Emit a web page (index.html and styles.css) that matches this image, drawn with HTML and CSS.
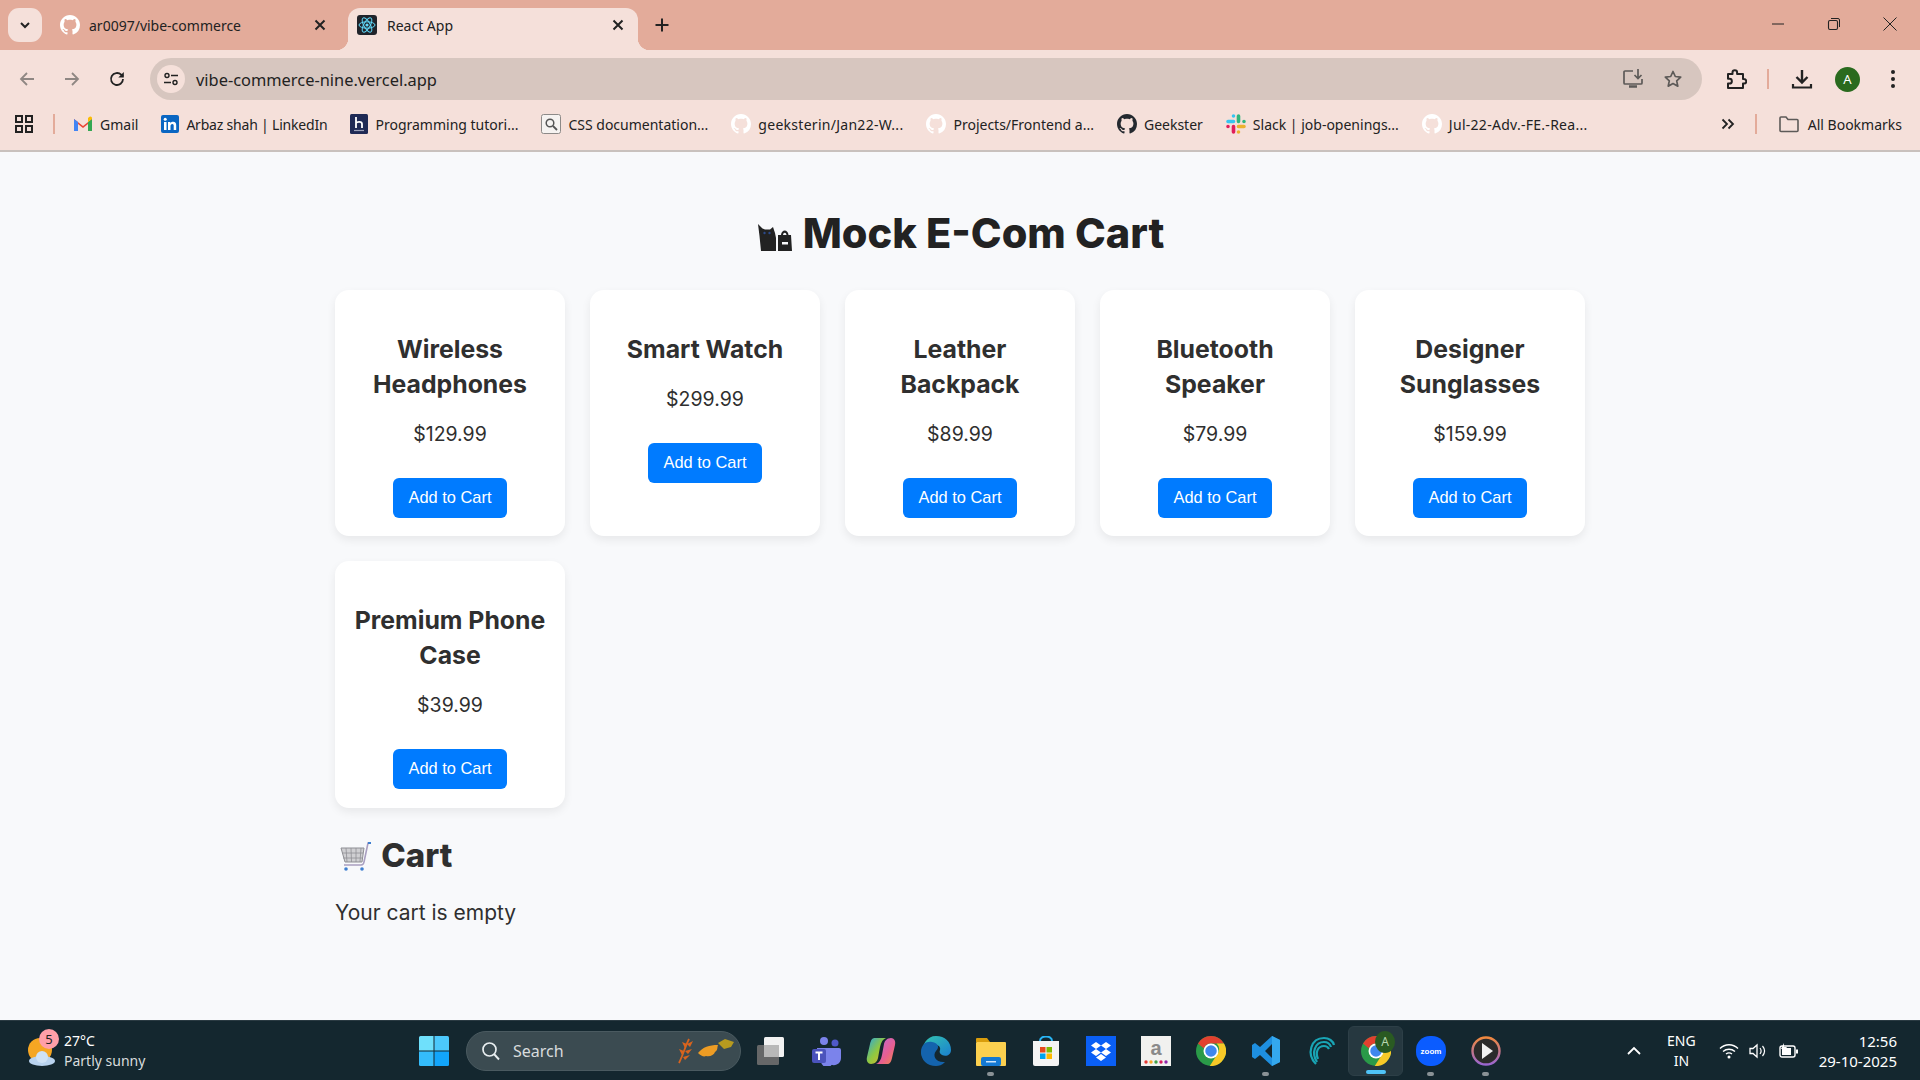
FILE: index.html
```html
<!DOCTYPE html>
<html lang="en">
<head>
<meta charset="utf-8">
<title>React App</title>
<link rel="stylesheet" href="styles.css">
</head>
<body>
<svg class="defs" width="0" height="0" aria-hidden="true">
  <symbol id="gh" viewBox="0 0 16 16"><path d="M8 0C3.58 0 0 3.58 0 8c0 3.54 2.29 6.53 5.47 7.59.4.07.55-.17.55-.38 0-.19-.01-.82-.01-1.49-2.01.37-2.53-.49-2.69-.94-.09-.23-.48-.94-.82-1.13-.28-.15-.68-.52-.01-.53.63-.01 1.08.58 1.23.82.72 1.21 1.87.87 2.33.66.07-.52.28-.87.51-1.07-1.78-.2-3.64-.89-3.64-3.95 0-.87.31-1.59.82-2.15-.08-.2-.36-1.02.08-2.12 0 0 .67-.21 2.2.82.64-.18 1.32-.27 2-.27.68 0 1.36.09 2 .27 1.53-1.04 2.2-.82 2.2-.82.44 1.1.16 1.92.08 2.12.51.56.82 1.27.82 2.15 0 3.07-1.87 3.75-3.65 3.95.29.25.54.73.54 1.48 0 1.07-.01 1.93-.01 2.2 0 .21.15.46.55.38A8.013 8.013 0 0016 8c0-4.42-3.58-8-8-8z"/></symbol>
  <symbol id="x" viewBox="0 0 16 16"><path d="M3.5 3.5l9 9M12.5 3.5l-9 9" fill="none" stroke="currentColor" stroke-width="2"/></symbol>
  <symbol id="chrome" viewBox="0 0 24 24"><circle cx="12" cy="12" r="12" fill="#2a9a48"/><path d="M12 0a12 12 0 0 1 10.39 6H12a6 6 0 0 0-5.6 4L1.6 6A12 12 0 0 1 12 0z" fill="#e2402f"/><path d="M22.39 6A12 12 0 0 1 11 24l6-9.5A6 6 0 0 0 16.5 6z" fill="#f8c927"/><circle cx="12" cy="12" r="6" fill="#fff"/><circle cx="12" cy="12" r="4.6" fill="#3f87ee"/></symbol>
</svg>

<header class="chrome">
  <div class="tabstrip">
    <button class="tab-search"><svg width="14" height="14" viewBox="0 0 14 14"><path d="M3 5l4 4 4-4" fill="none" stroke="#222" stroke-width="2"/></svg></button>
    <div class="tab">
      <svg class="fav gh-light" width="20" height="20"><use href="#gh"/></svg>
      <span class="tab-title">ar0097/vibe-commerce</span>
      <svg class="tab-x" width="16" height="16"><use href="#x"/></svg>
    </div>
    <div class="tab tab-active">
      <svg class="fav" width="20" height="20" viewBox="0 0 20 20"><rect width="20" height="20" rx="3" fill="#20232a"/><g fill="none" stroke="#61dafb" stroke-width="1"><ellipse cx="10" cy="10" rx="8" ry="3.2"/><ellipse cx="10" cy="10" rx="8" ry="3.2" transform="rotate(60 10 10)"/><ellipse cx="10" cy="10" rx="8" ry="3.2" transform="rotate(120 10 10)"/></g><circle cx="10" cy="10" r="1.6" fill="#61dafb"/></svg>
      <span class="tab-title">React App</span>
      <svg class="tab-x" width="16" height="16"><use href="#x"/></svg>
    </div>
    <svg class="new-tab" width="16" height="16" viewBox="0 0 16 16"><path d="M8 1.5v13M1.5 8h13" stroke="#222" stroke-width="2"/></svg>
    <div class="win-controls">
      <svg width="14" height="14" viewBox="0 0 14 14"><path d="M1 7h12" stroke="#222" stroke-width="1"/></svg>
      <svg width="14" height="14" viewBox="0 0 14 14"><rect x="1.5" y="3.5" width="9" height="9" rx="1.5" fill="none" stroke="#222" stroke-width="1.1"/><path d="M4 1.5h7a1.5 1.5 0 0 1 1.5 1.5v7" fill="none" stroke="#222"/></svg>
      <svg width="14" height="14" viewBox="0 0 14 14"><path d="M.5.5l13 13M13.5.5l-13 13" stroke="#222" stroke-width="1"/></svg>
    </div>
  </div>

  <div class="toolbar">
    <svg class="tool" width="18" height="18" viewBox="0 0 18 18"><path d="M16 9H3M9 3L3 9l6 6" fill="none" stroke="#8f8783" stroke-width="1.8"/></svg>
    <svg class="tool" width="18" height="18" viewBox="0 0 18 18"><path d="M2 9h13M9 3l6 6-6 6" fill="none" stroke="#8f8783" stroke-width="1.8"/></svg>
    <svg class="tool" width="18" height="18" viewBox="0 0 18 18"><path d="M15 9a6 6 0 1 1-1.8-4.3L15 6.500" fill="none" stroke="#222" stroke-width="1.8"/><path d="M15.800 2v5.500h-5.500z" fill="#222"/></svg>
    <div class="omnibox">
      <span class="site-info"><svg width="16" height="16" viewBox="0 0 16 16"><g fill="none" stroke="#222" stroke-width="1.400"><circle cx="4" cy="4.500" r="2"/><circle cx="12" cy="11.500" r="2"/><path d="M8 4.500h7M1 11.500h7"/></g></svg></span>
      <span class="url">vibe-commerce-nine.vercel.app</span>
      <svg class="omni-icon" width="22" height="22" viewBox="0 0 22 22"><path d="M11 3H3a1 1 0 0 0-1 1v11a1 1 0 0 0 1 1h16a1 1 0 0 0 1-1v-4" fill="none" stroke="#5d5a58" stroke-width="1.700"/><path d="M7 18.500h8" stroke="#5d5a58" stroke-width="2.500"/><path d="M16 1v9M12.500 7l3.500 3.500L19.500 7" fill="none" stroke="#5d5a58" stroke-width="1.700"/></svg>
      <svg class="omni-icon star" width="20" height="20" viewBox="0 0 20 20"><path d="M10 2.500l2.300 5 5.400.6-4 3.700 1.100 5.400L10 14.500l-4.800 2.700 1.100-5.400-4-3.700 5.400-.6z" fill="none" stroke="#5d5a58" stroke-width="1.700" stroke-linejoin="round"/></svg>
    </div>
    <svg class="ext" width="22" height="22" viewBox="0 0 22 22"><path d="M3 6h4.500V4.500a2.300 2.300 0 0 1 4.600 0V6H18v5h1a2.300 2.300 0 0 1 0 4.600h-1V20H3v-4.500h1.500a2.300 2.300 0 0 0 0-4.700H3z" fill="none" stroke="#222" stroke-width="2" stroke-linejoin="round"/></svg>
    <span class="vdiv"></span>
    <svg class="dl" width="22" height="22" viewBox="0 0 22 22"><path d="M11 2v12M5.500 9l5.500 5.500L16.500 9" fill="none" stroke="#222" stroke-width="2.400"/><path d="M2 16v3.500h18V16" fill="none" stroke="#222" stroke-width="2.200"/></svg>
    <span class="avatar">A</span>
    <svg class="menu" width="6" height="20" viewBox="0 0 6 20"><circle cx="3" cy="3" r="2" fill="#222"/><circle cx="3" cy="10" r="2" fill="#222"/><circle cx="3" cy="17" r="2" fill="#222"/></svg>
  </div>

  <nav class="bookmarks">
    <svg class="apps" width="18" height="18" viewBox="0 0 18 18"><g fill="none" stroke="#222" stroke-width="2"><rect x="1" y="1" width="6" height="6"/><rect x="11" y="1" width="6" height="6"/><rect x="1" y="11" width="6" height="6"/><rect x="11" y="11" width="6" height="6"/></g></svg>
    <span class="vdiv vdiv-bm"></span>
    <a class="bm"><svg width="20" height="18" viewBox="0 0 20 16"><path d="M1 15V3l9 7 9-7v12h-4V8l-5 4-5-4v7z" fill="#ea4335"/><path d="M1 3v12h4V6z" fill="#4285f4"/><path d="M19 3v12h-4V6z" fill="#34a853"/><path d="M15 6V2l1.500-1.200A1.600 1.600 0 0 1 19 2.200V3z" fill="#fbbc04"/></svg>Gmail</a>
    <a class="bm tight"><svg width="18" height="18" viewBox="0 0 18 18"><rect width="18" height="18" rx="2" fill="#0a66c2"/><path d="M3 7h2.500v8H3zM7 7h2.400v1.200C10 7.300 11 6.800 12.200 6.800c2.200 0 3 1.400 3 3.500V15h-2.500v-4.200c0-1.100-.4-1.800-1.300-1.800-1 0-1.900.8-1.900 2V15H7z" fill="#fff"/><circle cx="4.200" cy="4.300" r="1.500" fill="#fff"/></svg>Arbaz shah | LinkedIn</a>
    <a class="bm"><svg width="18" height="20" viewBox="0 0 18 20"><rect width="18" height="20" rx="1.500" fill="#1f2a55"/><path d="M6 3v11M6 9c1-1.500 6-2 6 1v4" fill="none" stroke="#fff" stroke-width="1.800"/><path d="M4 16.500h10" stroke="#9aa0b8" stroke-width="1.200"/></svg>Programming tutori...</a>
    <a class="bm"><svg width="20" height="20" viewBox="0 0 20 20"><rect x=".5" y=".5" width="19" height="19" rx="2" fill="#f6f3f1" stroke="#8d8a88"/><circle cx="9" cy="9" r="3.800" fill="none" stroke="#555" stroke-width="1.500"/><path d="M12 12l4 4" stroke="#555" stroke-width="1.800"/></svg>CSS documentation...</a>
    <a class="bm wide"><svg class="gh-light" width="20" height="20"><use href="#gh"/></svg>geeksterin/Jan22-W...</a>
    <a class="bm"><svg class="gh-light" width="20" height="20"><use href="#gh"/></svg>Projects/Frontend a...</a>
    <a class="bm"><svg class="gh-dark" width="20" height="20"><use href="#gh"/></svg>Geekster</a>
    <a class="bm"><svg width="20" height="20" viewBox="0 0 20 20"><g stroke-width="3.600" stroke-linecap="round"><path d="M7.500 2v.01M2 7.500h5.500" stroke="#36c5f0"/><path d="M12.500 2v5.500M18 7.500v.01" stroke="#2eb67d"/><path d="M18 12.500h-5.500M12.500 18v.01" stroke="#ecb22e"/><path d="M7.500 18v-5.500M2 12.500v.01" stroke="#e01e5a"/></g></svg>Slack | job-openings...</a>
    <a class="bm wide"><svg class="gh-light" width="20" height="20"><use href="#gh"/></svg>Jul-22-Adv.-FE.-Rea...</a>
    <svg class="more" width="14" height="12" viewBox="0 0 14 12"><path d="M1.500 1.500L6 6l-4.500 4.500M7.500 1.500L12 6l-4.500 4.500" fill="none" stroke="#222" stroke-width="1.800"/></svg>
    <span class="vdiv vdiv-bm2"></span>
    <a class="bm bm-all"><svg width="20" height="18" viewBox="0 0 20 18"><path d="M1 15.500V3a1 1 0 0 1 1-1h5l2 2.500h9a1 1 0 0 1 1 1v10a1 1 0 0 1-1 1H2a1 1 0 0 1-1-1z" fill="none" stroke="#5d5a58" stroke-width="1.600"/></svg>All Bookmarks</a>
  </nav>
</header>

<main class="page">
  <div class="container">
    <h1 class="title"><svg class="title-icon" width="34" height="27" viewBox="0 0 34 27"><path d="M0 0l4.500 4.500L7 5.500h5L15 3l2 6 1 5v13H3L1.500 12z" fill="#222"/><path d="M20 27V11h3c.5-6 7-6 7.500 0H33l1 16zM25 11h3.500c-.3-3-3.200-3-3.500 0z" fill="#222" fill-rule="evenodd"/><path d="M24 18h6v2.500h-6z" fill="#f8f9fb"/><circle cx="6.500" cy="9" r="1.200" fill="#2c4a8a"/><circle cx="11.500" cy="9" r="1.200" fill="#2c4a8a"/></svg> Mock E-Com Cart</h1>

    <section class="grid">
      <article class="card"><h3>Wireless Headphones</h3><p class="price">$129.99</p><button class="add">Add to Cart</button></article>
      <article class="card"><h3>Smart Watch</h3><p class="price">$299.99</p><button class="add">Add to Cart</button></article>
      <article class="card"><h3>Leather Backpack</h3><p class="price">$89.99</p><button class="add">Add to Cart</button></article>
      <article class="card"><h3>Bluetooth Speaker</h3><p class="price">$79.99</p><button class="add">Add to Cart</button></article>
      <article class="card"><h3>Designer Sunglasses</h3><p class="price">$159.99</p><button class="add">Add to Cart</button></article>
      <article class="card"><h3>Premium Phone Case</h3><p class="price">$39.99</p><button class="add">Add to Cart</button></article>
    </section>

    <h2 class="cart-title"><svg class="cart-icon" width="32" height="30" viewBox="0 0 32 30"><path d="M1 6h23l-2 14H5z" fill="#cfcfd2" stroke="#8f8f94" stroke-width="1"/><path d="M6 6l1 14M11 6l.5 14M16 6v14M21 6l-1 14M2 11h21M3 16h20" stroke="#8f8f94" stroke-width=".8"/><path d="M31 1h-3l-4 19c-.3 2-1 3-3 3H4" fill="none" stroke="#a99fc0" stroke-width="1.600"/><path d="M28 1h3" stroke="#3f7fd0" stroke-width="2"/><circle cx="6" cy="27" r="1.800" fill="#3f7fd0"/><circle cx="22" cy="27" r="1.800" fill="#3f7fd0"/></svg> Cart</h2>
    <p class="empty">Your cart is empty</p>
  </div>
</main>

<footer class="taskbar">
  <div class="weather">
    <span class="weather-icon">
      <svg width="32" height="36" viewBox="0 0 32 36"><circle cx="13" cy="17" r="12" fill="#f5a623"/><ellipse cx="15" cy="28" rx="13" ry="5" fill="#b9d3ef"/><circle cx="15" cy="24" r="6" fill="#cfe2f6"/></svg>
      <span class="badge">5</span>
    </span>
    <div class="weather-text"><span>27°C</span><span class="dim">Partly sunny</span></div>
  </div>
  <div class="center">
    <svg class="start" width="30" height="30" viewBox="0 0 30 30"><path d="M0 1.500A1.500 1.500 0 0 1 1.500 0h13v14.500H0z" fill="#6fe0fb"/><path d="M15.500 0h13A1.500 1.500 0 0 1 30 1.500v13H15.500z" fill="#4cc8fb"/><path d="M0 15.500h14.500V30h-13A1.500 1.500 0 0 1 0 28.500z" fill="#34bcfb"/><path d="M15.500 15.500H30v13a1.500 1.500 0 0 1-1.500 1.500h-13z" fill="#12a5fb"/></svg>
    <div class="search">
      <svg width="20" height="20" viewBox="0 0 20 20"><circle cx="8.500" cy="8.500" r="6.500" fill="none" stroke="#e8eef0" stroke-width="1.700"/><path d="M13 13l5 5.500" stroke="#e8eef0" stroke-width="1.900"/></svg>
      <span>Search</span>
      <svg class="leaf" width="58" height="26" viewBox="0 0 58 26"><path d="M1 25C5 17 7 9 11 1" stroke="#d9641e" stroke-width="1.800" fill="none"/><path d="M4 17L1 11l5 2zM7 10L4 4l5 2zM9 6l6-3-3 6zM7 13l7-2-4 5zM5 19l7-2-5 5z" fill="#d9641e"/><path d="M20 15c5-6 11-8 20-8-1 3 0 5-3 7-1 3-5 5-9 4-2 1-5 0-8-3z" fill="#ed9c24"/><path d="M40 5l7-4 9 3-3 5-7 2z" fill="#b79a1f"/></svg>
    </div>
    <div class="apps-row">
      <span class="app"><svg width="30" height="30" viewBox="0 0 30 30"><rect x="8" y="1" width="20" height="20" rx="1.500" fill="#f2f2f2"/><rect x="1" y="9" width="22" height="20" rx="1.500" fill="#6f6f6f" fill-opacity=".9"/><rect x="8" y="9" width="15" height="12" fill="#b8b8b8"/></svg></span>
      <span class="app"><svg width="30" height="30" viewBox="0 0 30 30"><circle cx="13" cy="5" r="4" fill="#7b83eb"/><circle cx="24" cy="7" r="3.500" fill="#5059c9"/><path d="M18 12h10a2 2 0 0 1 2 2v8a7 7 0 0 1-12 5z" fill="#7b83eb"/><path d="M6 12h14a2 2 0 0 1 2 2v10a6 6 0 0 1-12 2H6z" fill="#7b83eb"/><rect x="1" y="13" width="14" height="14" rx="2" fill="#4b53bc"/><path d="M4.500 16.500h7M8 16.500V24" stroke="#fff" stroke-width="2"/></svg></span>
      <span class="app"><svg width="30" height="30" viewBox="0 0 30 30"><defs><linearGradient id="cpa" x1="0" y1="0" x2="1" y2="1"><stop offset="0" stop-color="#2aa7e0"/><stop offset=".5" stop-color="#8fc840"/><stop offset="1" stop-color="#e8b32b"/></linearGradient><linearGradient id="cpb" x1="0" y1="0" x2="1" y2="1"><stop offset="0" stop-color="#b86be0"/><stop offset=".6" stop-color="#e85f90"/><stop offset="1" stop-color="#f0884a"/></linearGradient></defs><path d="M9 2h11c-3 1-5 4-6 9l-2 11c-.6 3-3 6-7 6-3 0-5-3-4-7l3-13c1-4 2-6 5-6z" fill="url(#cpa)"/><path d="M21 28H10c3-1 5-4 6-9l2-11c.6-3 3-6 7-6 3 0 5 3 4 7l-3 13c-1 4-2 6-5 6z" fill="url(#cpb)"/></svg></span>
      <span class="app"><svg width="30" height="30" viewBox="0 0 30 30"><defs><linearGradient id="edg" x1="0" y1="0" x2="1" y2="1"><stop offset="0" stop-color="#34c6b0"/><stop offset="1" stop-color="#1a7fd0"/></linearGradient></defs><path d="M15 0c9 0 15 6 15 14 0 5-5 7-9 5-2-1-3-3-2-5 1-3-2-6-7-5-6 1-11 6-12 11C1 8 6 0 15 0z" fill="url(#edg)"/><path d="M0 16c0-8 6-11 11-10 6 1 8 5 4 9-4 5 0 12 9 11-3 3-6 4-9 4C6 30 0 24 0 16z" fill="#1463ad"/></svg></span>
      <span class="app dot"><svg width="30" height="30" viewBox="0 0 30 30"><path d="M0 3a1 1 0 0 1 1-1h10l3 4h-14z" fill="#d99d0c"/><rect y="6" width="30" height="24" rx="1" fill="#fcd04f"/><rect x="5" y="21" width="20" height="9" rx="2" fill="#1579d2"/><rect x="10" y="25" width="10" height="1.500" fill="#cfe6fb"/></svg></span>
      <span class="app"><svg width="30" height="30" viewBox="0 0 30 30"><path d="M9 5c0-6 12-6 12 0" fill="none" stroke="#29b6f6" stroke-width="2"/><path d="M2 5h26v23a2 2 0 0 1-2 2H4a2 2 0 0 1-2-2z" fill="#f4f4f4"/><rect x="9" y="11" width="5.500" height="5.500" fill="#e8491d"/><rect x="15.500" y="11" width="5.500" height="5.500" fill="#7fba00"/><rect x="9" y="17.500" width="5.500" height="5.500" fill="#00a4ef"/><rect x="15.500" y="17.500" width="5.500" height="5.500" fill="#ffb900"/></svg></span>
      <span class="app"><svg width="30" height="30" viewBox="0 0 30 30"><rect width="30" height="30" fill="#0a5ff5"/><path d="M10 6l5 3.500-5 3.500-5-3.500zM20 6l5 3.500-5 3.500-5-3.500zM10 13l5 3.500-5 3.500-5-3.500zM20 13l5 3.500-5 3.500-5-3.500zM15 18l5 3.500-5 3.500-5-3.500z" fill="#fff"/></svg></span>
      <span class="app"><svg width="30" height="30" viewBox="0 0 30 30"><rect width="30" height="30" fill="#f1f1ef"/><text class="amazon-text" x="15" y="19" text-anchor="middle">a</text><circle cx="5" cy="26" r="1.700" fill="#e53935"/><circle cx="10" cy="26" r="1.700" fill="#f9a825"/><circle cx="15" cy="26" r="1.700" fill="#43a047"/><circle cx="20" cy="26" r="1.700" fill="#d81b60"/><circle cx="25" cy="26" r="1.700" fill="#8e24aa"/></svg></span>
      <span class="app"><svg width="30" height="30"><use href="#chrome"/></svg></span>
      <span class="app dot"><svg width="30" height="30" viewBox="0 0 30 30"><path d="M21 0l8 4v22l-8 4-12-11-5 4-3-2v-12l3-2 5 4zM21 8l-7 7 7 7z" fill="#1e8fe0" fill-rule="evenodd"/><path d="M21 0l8 4v22l-8 4z" fill="#34a8ee"/></svg></span>
      <span class="app"><svg width="30" height="30" viewBox="0 0 30 30"><g fill="none" stroke="#19a5b5" stroke-width="2.200"><path d="M10 28C0 18 5 2 18 2c5 0 9 3 10 7"/><path d="M11 26C5 17 9 6 18 6c4 0 6 2 7 5"/><path d="M12 23C9 16 12 10 18 10c2 0 4 1 5 3"/></g></svg></span>
      <span class="app app-active"><svg width="30" height="30"><use href="#chrome"/></svg><span class="app-badge">A</span></span>
      <span class="app dot"><svg width="30" height="30" viewBox="0 0 30 30"><rect width="30" height="30" rx="14" fill="#0b5cff"/><text class="zoom-text" x="15" y="18" text-anchor="middle">zoom</text></svg></span>
      <span class="app dot"><svg width="30" height="30" viewBox="0 0 30 30"><defs><linearGradient id="pl" x1="0" y1="0" x2="0" y2="1"><stop offset="0" stop-color="#f0883e"/><stop offset="1" stop-color="#9a66d0"/></linearGradient></defs><circle cx="15" cy="15" r="13.500" fill="#2b2b2b" stroke="url(#pl)" stroke-width="2.400"/><path d="M11 7l11 8-11 8z" fill="#f1f1f1"/></svg></span>
    </div>
  </div>
  <div class="tray">
    <svg class="chev" width="14" height="9" viewBox="0 0 14 9"><path d="M1 8l6-6 6 6" fill="none" stroke="#fff" stroke-width="1.800"/></svg>
    <div class="lang"><span>ENG</span><span>IN</span></div>
    <svg class="tray-ic" width="20" height="16" viewBox="0 0 20 16"><g fill="none" stroke="#fff" stroke-width="1.400"><path d="M1 5.500c5-5 13-5 18 0"/><path d="M4 8.500c3.500-3 8.500-3 12 0"/><path d="M7 11c2-1.500 4-1.500 6 0"/></g><circle cx="10" cy="14" r="1.500" fill="#fff"/></svg>
    <svg class="tray-ic" width="20" height="16" viewBox="0 0 20 16"><path d="M1 5.500h3l4-3.500v12l-4-3.500H1z" fill="none" stroke="#fff" stroke-width="1.300"/><path d="M11 5c1.500 2 1.500 4 0 6M13.500 3c2.500 3 2.500 7 0 10" fill="none" stroke="#fff" stroke-width="1.200"/></svg>
    <svg class="tray-ic" width="20" height="16" viewBox="0 0 20 16"><rect x="1" y="3" width="15" height="11" rx="2" fill="none" stroke="#fff" stroke-width="1.400"/><rect x="3" y="5" width="9" height="7" fill="#fff"/><rect x="17" y="6.500" width="2" height="4" fill="#fff"/><path d="M5 0L2 6h3l-1 4 4-6H5z" fill="#fff"/></svg>
    <div class="clock"><span>12:56</span><span>29-10-2025</span></div>
  </div>
</footer>
</body>
</html>
```
FILE: styles.css
```css
* { box-sizing: border-box; }
html, body { margin: 0; height: 100%; }
body {
  display: flex;
  flex-direction: column;
  height: 100vh;
  overflow: hidden;
  background: #f8f9fb;
  font-family: "Noto Sans", "Open Sans", sans-serif;
}
.defs { position: absolute; }

/* browser chrome */
.chrome { flex: none; background: #f5e0da; border-bottom: 2px solid #c9c1bd; height: 152px; }
.tabstrip { height: 50px; background: #e3ab9a; display: flex; align-items: flex-end; padding-left: 8px; position: relative; }
.tab-search { width: 34px; height: 34px; margin-bottom: 8px; border: 0; border-radius: 11px; background: #f5e0da; display: flex; align-items: center; justify-content: center; padding: 0; }
.tab { width: 290px; height: 42px; display: flex; align-items: center; gap: 9px; padding: 0 12px 8px 10px; font-size: 14px; color: #222; border-radius: 12px 12px 0 0; position: relative; }
.tab:first-of-type { margin-left: 8px; width: 298px; padding-right: 20px; }
.tab-active { background: #f5e0da; padding-left: 9px; gap: 10px; }
.tab-active::before, .tab-active::after { content: ""; position: absolute; bottom: 0; width: 12px; height: 12px; }
.tab-active::before { left: -12px; background: radial-gradient(circle at 0 0, transparent 12px, #f5e0da 12.5px); }
.tab-active::after { right: -12px; background: radial-gradient(circle at 100% 0, transparent 12px, #f5e0da 12.5px); }
.tab-title { flex: 1; white-space: nowrap; overflow: hidden; }
.tab-x { color: #222; }
.new-tab { margin: 0 0 17px 16px; }
.gh-light { fill: #fff; }
.gh-dark { fill: #24292f; }
.win-controls { margin-left: auto; display: flex; gap: 42px; padding: 0 23px 19px 0; }

.toolbar { height: 50px; display: flex; align-items: center; padding: 8px 18px 0; }
.tool { margin-right: 27px; flex: none; }
.tool:last-of-type { margin-right: 24px; }
.omnibox { width: 1552px; height: 42px; margin-left: -3px; background: #d7c6bf; border-radius: 21px; display: flex; align-items: center; padding: 0 19px 0 7px; flex: none; }
.site-info { width: 28px; height: 28px; border-radius: 50%; background: #f5e0da; display: flex; align-items: center; justify-content: center; flex: none; }
.url { flex: 1; margin-left: 11px; font-size: 16.400px; color: #222; }
.omni-icon { flex: none; }
.star { margin-left: 19px; }
.ext { margin-left: 23px; flex: none; }
.vdiv { width: 2px; height: 20px; background: #e3ab9a; flex: none; margin: 0 22px 0 20px; }
.dl { flex: none; }
.avatar { width: 25px; height: 25px; border-radius: 50%; background: #2a6a1e; color: #fff; font-size: 13px; display: flex; align-items: center; justify-content: center; margin-left: 22px; flex: none; }
.menu { margin-left: 30px; flex: none; }

.bookmarks { height: 50px; display: flex; align-items: center; padding: 0 18px 2px 15px; font-size: 14px; color: #222; }
.apps { flex: none; }
.vdiv-bm { margin: 0 18px 0 20px; }
.bm { display: flex; align-items: center; gap: 7px; margin-right: 23px; white-space: nowrap; }
.bm svg { flex: none; }
.tight { letter-spacing: -.2px; }
.wide { letter-spacing: .28px; }
.more { margin-left: auto; margin-right: -2px; }
.vdiv-bm2 { margin: 0 22px; }
.bm-all { margin-right: 0; gap: 9px; }

/* page */
.page { flex: 1; min-height: 0; }
.container { width: 1250px; margin: 0 auto; padding-top: 51px; color: #2f2f2f; font-family: Inter, "Open Sans", sans-serif; }
.title { margin: 0 0 27px; font-size: 41.500px; line-height: 60px; font-weight: 800; text-align: center; color: #222; }
.title-icon { vertical-align: -3px; margin: 0 2px; }
.grid { display: grid; grid-template-columns: repeat(5, 230px); gap: 25px; align-items: start; grid-auto-rows: min-content; }
.card { background: #fff; border-radius: 14px; box-shadow: 0 4px 10px rgba(0, 0, 0, .07); padding: 42px 15px 18px; text-align: center; height: 246px; }
.card:last-child { height: 247px; }
.card h3 { margin: 0 0 15px; font-size: 24.800px; line-height: 35px; font-weight: 700; color: #2f2f2f; }
.price { margin: 0 0 26px; font-size: 19.500px; line-height: 35px; }
.add { height: 40px; width: 114px; padding: 0 0 2px; border: 0; border-radius: 6px; background: #007bff; color: #fff; font: 16.400px "Liberation Sans", Arial, sans-serif; }
.cart-title { margin: 23px 0 0; font-size: 33px; line-height: 48px; font-weight: 800; }
.cart-icon { margin-left: 5px; margin-right: 2px; vertical-align: -5px; }
.empty { margin: 18px 0 0; font-size: 21px; line-height: 32px; }

/* taskbar */
.taskbar { flex: none; height: 60px; background: #14272f; border-top: 1px solid #2a3a42; display: flex; align-items: center; color: #fff; font-size: 14px; position: relative; }
.weather { width: 414px; padding-left: 27px; display: flex; align-items: center; gap: 7px; flex: none; }
.weather-icon { position: relative; display: block; width: 30px; height: 36px; }
.badge { position: absolute; top: -4px; left: 12px; width: 20px; height: 20px; border-radius: 50%; background: #ff9fa8; color: #222; font-size: 13px; display: flex; align-items: center; justify-content: center; }
.weather-text { display: flex; flex-direction: column; line-height: 20px; }
.dim { color: #d8dcdd; }
.center { display: flex; align-items: center; flex: none; }
.start { margin: 0 17px 0 5px; flex: none; }
.search { width: 275px; height: 40px; border-radius: 20px; background: #3b4b51; border: 1px solid #4a5a60; display: flex; align-items: center; padding: 0 4px 0 14px; gap: 12px; font-size: 16px; color: #d8dcdd; }
.search span { flex: 1; }
.apps-row { display: flex; margin-left: 2px; }
.app { width: 55px; height: 50px; display: flex; align-items: center; justify-content: center; position: relative; }
.amazon-text { font: 700 20px "Liberation Sans", sans-serif; fill: #8a8a8a; }
.dot::after { content: ""; position: absolute; bottom: 0; left: 24px; width: 7px; height: 4px; border-radius: 2px; background: #8a9296; }
.app-active { background: #263840; border-radius: 6px; border: 1px solid #2d3f47; }
.app-active::after { content: ""; position: absolute; bottom: 1px; left: 17px; width: 20px; height: 4px; border-radius: 2px; background: #4fc3f7; }
.app-badge { position: absolute; top: 4px; left: 26px; width: 20px; height: 22px; border-radius: 50%; background: #2a5a22; color: #b9d8b0; font-size: 12px; display: flex; align-items: center; justify-content: center; }
.zoom-text { font: 700 8px "Liberation Sans", sans-serif; fill: #fff; }
.tray { margin-left: auto; display: flex; align-items: center; padding-right: 23px; }
.chev { margin-right: 26px; }
.lang { display: flex; flex-direction: column; align-items: center; line-height: 20px; margin-right: 23px; }
.tray-ic { margin-right: 10px; }
.clock { display: flex; flex-direction: column; align-items: flex-end; line-height: 20px; font-size: 15px; margin-left: 10px; }
```
